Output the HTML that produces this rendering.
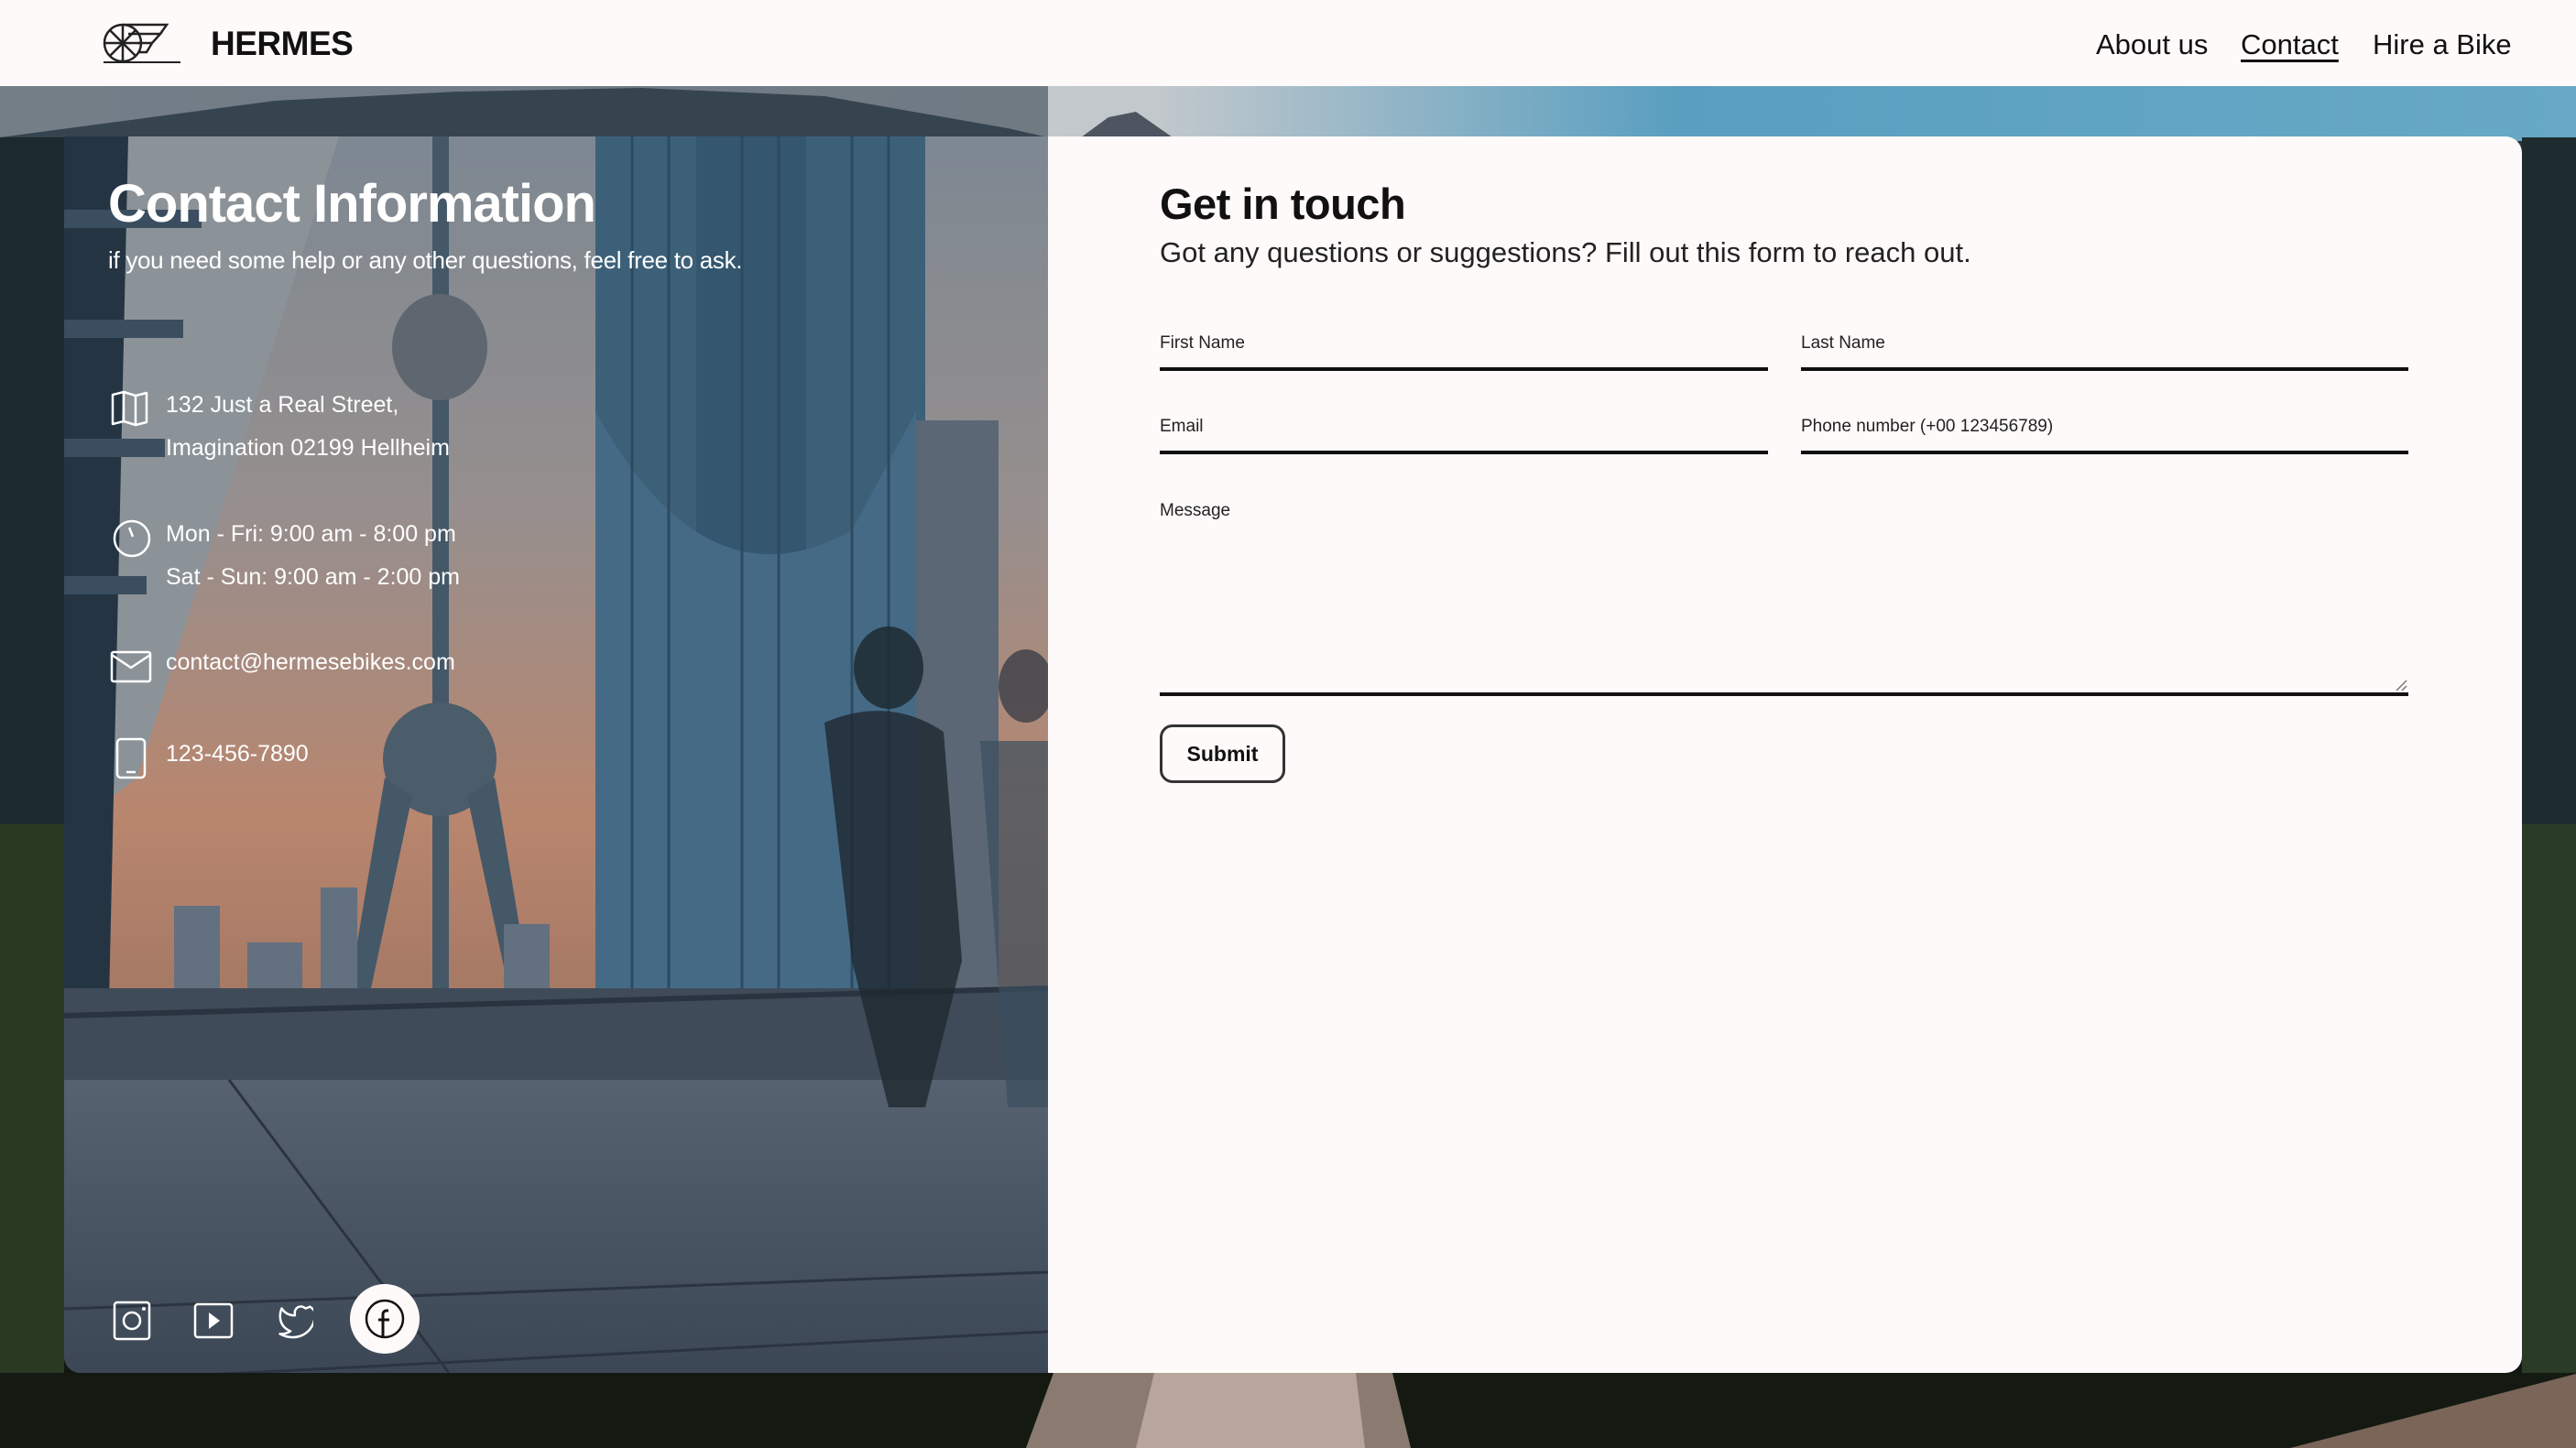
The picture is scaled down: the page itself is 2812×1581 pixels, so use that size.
<!DOCTYPE html>
<html><head><meta charset="utf-8"><style>
*{margin:0;padding:0;box-sizing:border-box}
html,body{width:2812px;height:1581px;overflow:hidden;background:#fdfaf9;font-family:"Liberation Sans",sans-serif}
.abs{position:absolute}
header{position:absolute;left:0;top:0;width:2812px;height:94px;background:#fdfaf9;z-index:5}
.brand{left:230px;top:27px;font-size:37px;font-weight:bold;color:#111;letter-spacing:-0.5px}
nav a{position:absolute;top:31px;font-size:31px;color:#111;text-decoration:none;white-space:nowrap}
.left{left:70px;top:149px;width:1074px;height:1350px;border-radius:0 0 0 18px;overflow:hidden}
.right{left:1144px;top:149px;width:1609px;height:1350px;background:#fdfaf9;border-radius:0 18px 18px 0}
.w{color:#fff}
.lbl{position:absolute;font-size:19px;color:#222}
.line{position:absolute;height:4px;background:#111}
</style></head><body>
<svg class="abs" style="left:0;top:0" width="2812" height="1581">
<defs>
<linearGradient id="sky" x1="0" x2="1" y1="0" y2="0"><stop offset="0" stop-color="#c9cfd4"/><stop offset="0.45" stop-color="#c2c8cc"/><stop offset="0.65" stop-color="#5a9fc0"/><stop offset="1" stop-color="#67a9c6"/></linearGradient>
<linearGradient id="ground" x1="0" x2="0" y1="0" y2="1"><stop offset="0" stop-color="#2c3a3a"/><stop offset="1" stop-color="#101510"/></linearGradient>
</defs>
<rect width="2812" height="1581" fill="url(#ground)"/>
<rect x="0" y="94" width="2812" height="60" fill="url(#sky)"/>
<path d="M0 150 L300 110 L500 100 L700 96 L900 105 L1100 140 L1144 150Z" fill="#5a6670"/>
<path d="M1180 150 L1210 128 L1240 122 L1280 150Z" fill="#4c5560"/>
<rect x="0" y="94" width="1144" height="60" fill="#0a1a2a" opacity="0.45"/>
<rect x="0" y="150" width="70" height="1431" fill="#1b2a2c"/>
<rect x="0" y="900" width="70" height="681" fill="#2a3a22"/>
<rect x="2753" y="150" width="59" height="1431" fill="#1e2c30"/>
<rect x="2753" y="900" width="59" height="681" fill="#2b3c26"/>
<rect x="0" y="1499" width="2812" height="82" fill="#141a12"/>
<path d="M1150 1499 L1520 1499 L1540 1581 L1120 1581Z" fill="#8a7a70"/>
<path d="M1260 1499 L1480 1499 L1490 1581 L1240 1581Z" fill="#b8a69c"/>
<path d="M2500 1581 L2812 1500 L2812 1581Z" fill="#7a6558"/>
</svg>
<header>
<svg class="abs" style="left:108px;top:18px" width="95" height="58" viewBox="108 18 95 58">
<g fill="none" stroke="#222" stroke-width="2.5">
<circle cx="134" cy="47" r="20"/>
<path d="M134 27V67M114 47H154M120 33L148 61M148 33L120 61"/>
<path d="M134 27H182L175 37H140M146 37H175L166 47H150M152 47H166L160 57H152"/>
<path d="M113 68H197" stroke-width="2"/>
</g></svg>
<div class="abs brand">HERMES</div>
<nav><a style="left:2288px">About us</a><a style="left:2446px;text-decoration:underline;text-underline-offset:6px;text-decoration-thickness:3px">Contact</a><a style="left:2590px">Hire a Bike</a></nav>
</header>

<div class="abs left">
<svg class="abs" style="left:0;top:0" width="1074" height="1350">
<defs>
<linearGradient id="ls" x1="0" x2="0" y1="0" y2="1"><stop offset="0" stop-color="#7d8892"/><stop offset="0.3" stop-color="#968f8e"/><stop offset="0.55" stop-color="#b9866e"/><stop offset="0.68" stop-color="#a77a66"/></linearGradient>
<linearGradient id="lg" x1="0" x2="0" y1="0" y2="1"><stop offset="0" stop-color="#566270"/><stop offset="1" stop-color="#3c4756"/></linearGradient>
</defs>
<rect width="1074" height="1350" fill="url(#ls)"/>
<path d="M0 0 L300 0 L80 700 L0 760Z" fill="#8c9398"/>
<path d="M0 0 L70 0 L40 1350 L0 1350Z" fill="#243442"/>
<g fill="#3a4e60"><rect x="0" y="80" width="150" height="20"/><rect x="0" y="200" width="130" height="20"/><rect x="0" y="330" width="110" height="20"/><rect x="0" y="480" width="90" height="20"/></g>
<rect x="580" y="0" width="360" height="1000" fill="#3d6079"/>
<rect x="690" y="0" width="120" height="1000" fill="#34566f"/>
<path d="M580 300 Q700 520 860 430 L930 300 L930 1000 L580 1000Z" fill="#456a85"/>
<rect x="930" y="310" width="90" height="700" fill="#5b6775"/>
<g stroke="#2c4a60" stroke-width="3"><path d="M620 0V1000M660 0V1000M740 0V1000M780 0V1000M860 0V1000M900 0V1000"/></g>
<rect x="402" y="0" width="18" height="1000" fill="#445868"/>
<ellipse cx="410" cy="230" rx="52" ry="58" fill="#5e6670"/>
<circle cx="410" cy="680" r="62" fill="#4b5c6a"/>
<path d="M350 700 L300 1000 L320 1000 L380 720Z M470 700 L520 1000 L500 1000 L440 720Z" fill="#445868"/>
<g fill="#627080"><rect x="120" y="840" width="50" height="160"/><rect x="200" y="880" width="60" height="120"/><rect x="280" y="820" width="40" height="180"/><rect x="480" y="860" width="50" height="140"/></g>
<rect x="0" y="930" width="1074" height="110" fill="#3f4b58"/>
<path d="M0 960 L1074 930" stroke="#2a3340" stroke-width="6"/>
<rect x="0" y="1030" width="1074" height="320" fill="url(#lg)"/>
<g stroke="#2b3440" stroke-width="3" fill="none"><path d="M0 1280 L1074 1240M0 1360 L1074 1305M180 1030 L420 1350"/></g>
<ellipse cx="900" cy="580" rx="38" ry="45" fill="#1f2a33" opacity="0.85"/>
<path d="M830 640 Q900 610 960 650 L980 900 L940 1060 L900 1060 L860 900 Z" fill="#1e2830" opacity="0.8"/>
<ellipse cx="1050" cy="600" rx="30" ry="40" fill="#2b3540" opacity="0.7"/>
<path d="M1000 660 L1074 660 L1074 1060 L1030 1060 Z" fill="#3a4e5e" opacity="0.7"/>
</svg>
<div class="abs w" style="left:48px;top:40px;font-size:58px;font-weight:bold;letter-spacing:-1px">Contact Information</div>
<div class="abs w" style="left:48px;top:120px;font-size:26px;letter-spacing:-0.3px">if you need some help or any other questions, feel free to ask.</div>
<svg class="abs" style="left:50px;top:277px" width="44" height="40" viewBox="0 0 44 40"><path d="M3 5 L15 2 L28 6 L40 3 V35 L28 38 L15 34 L3 37Z M15 2V34 M28 6V38" fill="none" stroke="#fff" stroke-width="2.5" stroke-linejoin="round"/></svg>
<div class="abs w" style="left:111px;top:270px;font-size:25px;line-height:47px">132 Just a Real Street,<br>Imagination 02199 Hellheim</div>
<svg class="abs" style="left:52px;top:417px" width="44" height="44"><circle cx="22" cy="22" r="19" fill="none" stroke="#fff" stroke-width="2.5"/><path d="M19 10 L23 20" stroke="#fff" stroke-width="2.5"/></svg>
<div class="abs w" style="left:111px;top:411px;font-size:25px;line-height:47px">Mon - Fri: 9:00 am - 8:00 pm<br>Sat - Sun: 9:00 am - 2:00 pm</div>
<svg class="abs" style="left:50px;top:560px" width="46" height="38"><rect x="2" y="3" width="42" height="32" rx="2" fill="none" stroke="#fff" stroke-width="2.5"/><path d="M2 6 L23 20 L44 6" fill="none" stroke="#fff" stroke-width="2.5"/></svg>
<div class="abs w" style="left:111px;top:560px;font-size:25px">contact@hermesebikes.com</div>
<svg class="abs" style="left:56px;top:656px" width="34" height="46"><rect x="2" y="2" width="30" height="42" rx="4" fill="none" stroke="#fff" stroke-width="2.5"/><path d="M12 38H22" stroke="#fff" stroke-width="2.5"/></svg>
<div class="abs w" style="left:111px;top:660px;font-size:25px">123-456-7890</div>
<svg class="abs" style="left:52px;top:1270px" width="46" height="46"><rect x="3" y="3" width="38" height="40" rx="3" fill="none" stroke="#fff" stroke-width="2.5"/><circle cx="22" cy="23" r="9" fill="none" stroke="#fff" stroke-width="2.5"/><circle cx="35" cy="10" r="2" fill="#fff"/></svg>
<svg class="abs" style="left:140px;top:1270px" width="46" height="46"><rect x="3" y="5" width="40" height="36" rx="3" fill="none" stroke="#fff" stroke-width="2.5"/><path d="M18 14 L30 23 L18 32Z" fill="#fff"/></svg>
<svg class="abs" style="left:226px;top:1270px" width="46" height="46" viewBox="0 0 24 24"><path d="M22 4s-1 .6-2.5 1A3.5 3.5 0 0 0 13.5 8v1A8.4 8.4 0 0 1 6 5s-4 9 5 13a9.8 9.8 0 0 1-6 1.5c9 5 20 0 20-11.5 0-.3 0-.6-.1-.8A6.6 6.6 0 0 0 22 4z" fill="none" stroke="#fff" stroke-width="1.3" stroke-linejoin="round"/></svg>
<div class="abs" style="left:312px;top:1253px;width:76px;height:76px;border-radius:50%;background:#fdfaf9"></div>
<svg class="abs" style="left:327px;top:1268px" width="46" height="46" viewBox="0 0 46 46"><circle cx="23" cy="23" r="20" fill="none" stroke="#111" stroke-width="2.5"/><path d="M27 14 h-2 a4 4 0 0 0 -4 4 V43 M16 24 H28" fill="none" stroke="#111" stroke-width="3"/></svg>
</div>

<div class="abs right">
<div class="abs" style="left:122px;top:46px;font-size:47px;font-weight:bold;color:#111;letter-spacing:-0.5px">Get in touch</div>
<div class="abs" style="left:122px;top:109px;font-size:31px;color:#222">Got any questions or suggestions? Fill out this form to reach out.</div>
<div class="lbl" style="left:122px;top:215px">First Name</div>
<div class="line" style="left:122px;top:252px;width:664px"></div>
<div class="lbl" style="left:822px;top:215px">Last Name</div>
<div class="line" style="left:822px;top:252px;width:663px"></div>
<div class="lbl" style="left:122px;top:306px">Email</div>
<div class="line" style="left:122px;top:343px;width:664px"></div>
<div class="lbl" style="left:822px;top:306px">Phone number (+00 123456789)</div>
<div class="line" style="left:822px;top:343px;width:663px"></div>
<div class="lbl" style="left:122px;top:398px">Message</div>
<svg class="abs" style="left:1470px;top:592px" width="14" height="14"><path d="M2 13L13 2M8 13L13 8" stroke="#777" stroke-width="1.5"/></svg>
<div class="line" style="left:122px;top:607px;width:1363px"></div>
<div class="abs" style="left:122px;top:642px;width:137px;height:64px;border:3px solid #333;border-radius:14px;font-size:23px;font-weight:bold;color:#111;text-align:center;line-height:58px">Submit</div>
</div>
</body></html>
